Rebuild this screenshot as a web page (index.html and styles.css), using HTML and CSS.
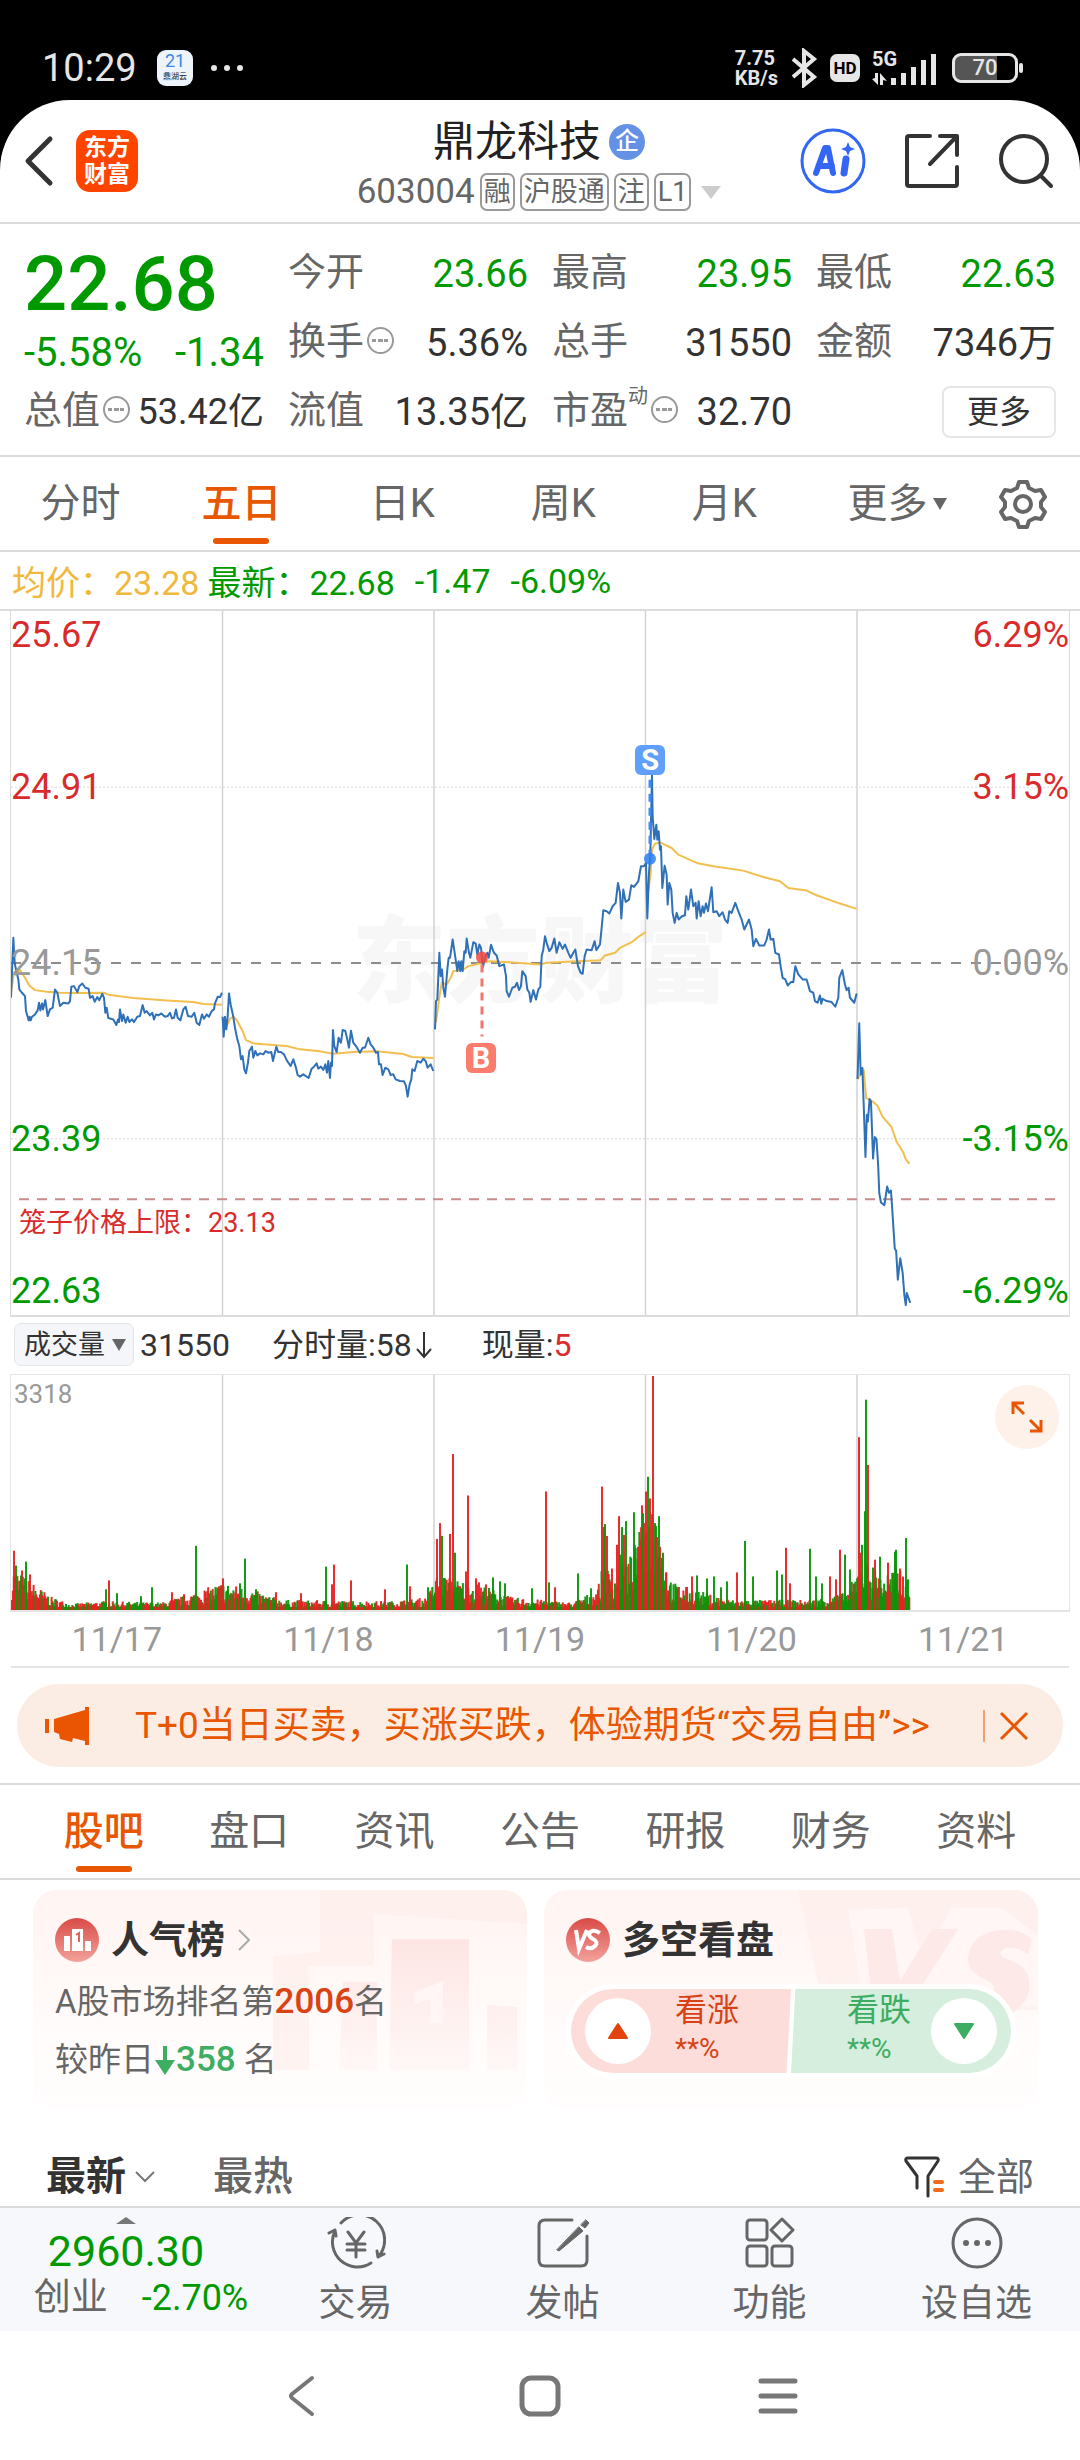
FILE: index.html
```
<!DOCTYPE html>
<html lang="zh-CN">
<head>
    <meta charset="UTF-8">
    <meta name="viewport" content="width=device-width, initial-scale=1">
    <title>鼎龙科技 603004</title>
    <link rel="stylesheet" href="styles.css">
</head>
<body>

<div class="status">
    <span class="time">10:29</span>
    <span class="status-app"><b>21</b><i>鼎湖云</i></span>
    <span class="status-dots"><i></i><i></i><i></i></span>
    <div class="status-right">
        <span class="speed"><span>7.75</span><span>KB/s</span></span>
        <svg width="28" height="40" viewBox="0 0 28 40" fill="none" stroke="#e6e6e6" stroke-width="4"><path d="M3 11l21 18-10 8V3l10 8L3 29"/></svg>
        <span class="hd">HD</span>
        <span class="signal">
            <b>5G</b>
            <svg width="66" height="34" viewBox="0 0 66 34" fill="#e6e6e6"><path d="M0 28l6 6V22H3v5zM8 34h3v-5l4 1-7-8zM19 27h5v7h-5zM29 22h5v12h-5zM39 16h5v18h-5zM49 9h5v25h-5zM59 3h5v31h-5z"/></svg>
        </span>
        <span class="battery">70</span>
    </div>
</div>

<div class="page">
    <header class="header">
        <div class="header-left">
            <button class="icon-btn" aria-label="返回"><svg width="30" height="52" viewBox="0 0 30 52" fill="none" stroke="#333" stroke-width="5" stroke-linecap="round" stroke-linejoin="round"><path d="M26 4L4 26l22 22"/></svg></button>
            <a href="#" class="logo">东方<br>财富</a>
        </div>
        <div class="header-title">
            <h1>鼎龙科技<span class="qi">企</span></h1>
            <div class="code">
                <span>603004</span>
                <span class="tag">融</span>
                <span class="tag">沪股通</span>
                <span class="tag">注</span>
                <span class="tag">L1</span>
                <i class="caret"></i>
            </div>
        </div>
        <div class="header-right">
            <button class="icon-btn" aria-label="AI">
                <svg width="66" height="66" viewBox="0 0 66 66" fill="none" stroke="#3366f5"><circle cx="33" cy="33" r="31" stroke-width="3"/><path d="M16 45l9-25h3l5 25M20 38h12" stroke-width="6" stroke-linecap="round" stroke-linejoin="round"/><path d="M46 31l-2 14" stroke-width="7" stroke-linecap="round"/><path d="M48 14l2 5 5 2-5 2-2 5-2-5-5-2 5-2z" fill="#3366f5" stroke="none"/></svg>
            </button>
            <button class="icon-btn" aria-label="分享">
                <svg width="56" height="56" viewBox="0 0 56 56" fill="none" stroke="#333" stroke-width="4" stroke-linecap="round" stroke-linejoin="round"><path d="M26 3H5q-2 0-2 2v46q0 2 2 2h46q2 0 2-2V34M36 3h17v19M53 3L26 31"/></svg>
            </button>
            <button class="icon-btn" aria-label="搜索">
                <svg width="56" height="56" viewBox="0 0 56 56" fill="none" stroke="#333" stroke-width="4" stroke-linecap="round"><circle cx="26" cy="26" r="23"/><path d="M44 44l9 9"/></svg>
            </button>
        </div>
    </header>

    <section class="quote">
        <div class="col total">
            <div class="price">22.68</div>
            <div class="change"><span>-5.58%</span><span>-1.34</span></div>
            <div class="item"><label>总值<i class="tip"></i></label><span>53.42亿</span></div>
        </div>
        <div class="col">
            <div class="item"><label>今开</label><span class="down">23.66</span></div>
            <div class="item"><label>换手<i class="tip"></i></label><span>5.36%</span></div>
            <div class="item"><label>流值</label><span>13.35亿</span></div>
        </div>
        <div class="col">
            <div class="item"><label>最高</label><span class="down">23.95</span></div>
            <div class="item"><label>总手</label><span>31550</span></div>
            <div class="item"><label>市盈<sup>动</sup><i class="tip"></i></label><span>32.70</span></div>
        </div>
        <div class="col">
            <div class="item"><label>最低</label><span class="down">22.63</span></div>
            <div class="item"><label>金额</label><span>7346万</span></div>
            <div class="item end"><button class="more">更多</button></div>
        </div>
    </section>

    <nav class="tabs period">
        <a href="#">分时</a>
        <a href="#" class="active">五日</a>
        <a href="#">日K</a>
        <a href="#">周K</a>
        <a href="#">月K</a>
        <a href="#" class="wide">更多<i class="caret small"></i></a>
        <button class="icon-btn setting" aria-label="设置">
            <svg width="48" height="50" viewBox="0 0 48 50" fill="none" stroke="#666" stroke-width="4" stroke-linejoin="round"><path d="M20 3h8l2 6 6 3 6-1 4 7-4 5v5l4 5-4 7-6-1-6 3-2 6h-8l-2-6-6-3-6 1-4-7 4-5v-5l-4-5 4-7 6 1 6-3z"/><circle cx="24" cy="25" r="8"/></svg>
        </button>
    </nav>

    <div class="info">
        <span class="avg">均价：23.28</span>
        <span>最新：22.68</span>
        <span class="gap">-1.47</span>
        <span class="gap">-6.09%</span>
    </div>

    <div class="chart">
        <div class="watermark">东方财富</div>
        <svg class="plot" viewBox="0 0 1058 705" preserveAspectRatio="none" fill="none">
            <path d="M211.5 0V705M423 0V705M634.5 0V705M846 0V705" stroke="#d2d2d2" stroke-width="1.5"/>
            <path d="M0 176.5H1058M0 528.5H1058" stroke="#d8d8d8" stroke-dasharray="2 2"/>
            <path d="M0 352.5H1044" stroke="#8c8c8c" stroke-width="2" stroke-dasharray="10 10"/>
            <path d="M8 589H1044" stroke="#c98a8a" stroke-width="2" stroke-dasharray="10 8"/>
            <g class="avg-line">
                <polyline transform="translate(-11 319) scale(.3333)" points="33,190 40,140 60,122 75,145 88,168 105,182 140,187 180,190 240,191 310,190 330,197 400,206 500,213 580,218 610,224 666,226"/>
                <polyline transform="translate(-11 319) scale(.3333)" points="680,290 690,268 700,262 710,272 728,305 738,332 760,342 860,350 900,360 960,366 1000,373 1060,368 1130,366 1210,374 1235,383 1300,386"/>
                <polyline transform="translate(419 129) scale(.3333)" points="18,850 27,780 35,730 50,735 62,715 70,695 100,690 115,680 150,672 180,665 240,668 330,675 350,670 440,665 512,662 525,648 555,640 570,625 605,608 625,592 648,577"/>
                <polyline transform="translate(419 129) scale(.3333)" points="650,480 657,440 662,400 666,330 675,312 690,308 725,325 745,345 800,370 850,380 940,393 1000,412 1050,425 1075,445 1130,453 1160,467 1230,492 1280,508"/>
                <polyline transform="translate(529 29) scale(.3444 .4464)" points="922,985 940,965 947,1028 965,1035 980,1045 995,1070 1020,1092 1035,1125 1055,1150 1062,1165 1073,1175"/>
            </g>
            <g class="price-line">
                <polyline transform="translate(-11 319) scale(.3333)" points="33,205 40,25 44,100 48,120 55,150 58,180 66,190 75,200 78,245 83,262 86,273 89,262 92,273 96,262 105,255 113,243 117,220 121,243 126,222 129,240 136,212 143,260 150,240 158,235 165,180 172,190 180,230 190,220 205,222 210,215 214,172 222,170 232,188 238,170 247,162 256,175 266,178 270,205 278,200 284,217 292,203 298,212 307,193 312,205 316,250 320,235 325,266 340,270 349,287 354,270 357,278 360,240 366,275 370,255 377,280 383,262 388,278 396,270 402,278 412,262 420,260 428,227 434,250 440,245 450,258 457,250 462,270 468,255 475,258 484,252 495,262 503,260 510,250 516,267 522,265 528,240 533,265 541,273 550,240 557,232 564,260 575,262 583,250 590,280 598,287 606,255 612,268 620,255 627,262 635,245 642,240 645,222 653,202 660,203 666,190"/>
                <polyline transform="translate(-11 319) scale(.3333)" points="668,262 671,322 675,262 679,300 683,262 687,192 692,225 700,262 705,295 712,330 718,350 723,390 728,380 733,420 738,432 744,400 748,365 756,352 760,385 766,365 772,378 780,372 790,375 797,365 805,370 814,368 819,395 829,352 835,368 843,368 852,375 858,388 865,400 872,410 880,390 888,415 893,437 900,442 910,435 926,446 935,418 942,412 950,402 955,418 963,412 970,422 976,405 981,430 985,395 990,446 993,400 996,410 999,302 1003,350 1010,368 1016,325 1023,340 1028,302 1036,305 1042,330 1047,355 1053,304 1060,340 1068,350 1080,370 1088,355 1095,355 1105,325 1112,345 1120,355 1128,370 1134,368 1137,405 1143,405 1148,437 1156,415 1165,420 1172,437 1180,435 1187,450 1200,455 1212,456 1218,470 1223,502 1229,465 1234,450 1237,420 1244,425 1252,395 1262,400 1270,388 1277,395 1283,415 1292,405 1300,425"/>
                <polyline transform="translate(419 129) scale(.3333)" points="15,870 18,785 22,780 28,640 32,710 36,690 40,745 45,772 52,690 56,655 60,655 68,600 74,640 82,695 86,665 91,695 94,665 98,695 103,635 107,640 110,597 117,640 121,655 130,608 137,612 142,645 148,615 153,625 159,682 166,650 172,640 176,655 183,616 192,640 200,648 208,680 222,675 228,710 230,755 237,772 247,745 255,742 261,730 267,752 273,740 277,695 287,710 292,750 298,760 302,787 310,752 318,780 325,750 331,742 335,650 340,630 345,590 350,610 358,635 365,625 373,597 380,640 388,608 398,628 405,615 415,640 422,655 430,640 436,630 444,680 452,700 458,703 464,650 470,630 485,632 494,605 499,632 510,615 514,575 520,512 530,515 538,522 548,500 557,490 564,430 570,460 574,537 580,450 587,487 597,480 604,437 612,442 625,425 633,380 642,380 648,370 652,537 657,400 661,345 666,105 668,230 673,298 679,255 682,300 686,275 690,330 693,320 697,445 704,378 710,405 713,495 718,430 724,450 728,520 734,550 740,520 746,540 756,530 765,527 769,470 775,510 783,450 790,500 797,490 800,537 806,485 812,530 818,500 822,520 828,492 834,515 845,443 850,518 860,515 868,530 878,518 885,540 893,550 898,515 905,520 916,490 925,515 935,540 943,570 957,540 965,570 970,620 978,598 988,618 1003,618 1010,600 1017,570 1022,600 1030,598 1036,640 1047,645 1052,680 1058,715 1066,720 1073,738 1083,728 1090,728 1096,680 1105,705 1118,720 1130,720 1140,755 1150,760 1155,785 1163,790 1170,768 1174,793 1178,778 1190,785 1205,788 1216,802 1225,775 1228,715 1237,692 1245,735 1250,752 1256,745 1260,775 1273,790 1280,762"/>
                <polyline transform="translate(529 29) scale(.3444 .4464)" points="922,985 927,860 931,975 936,960 940,1045 945,1160 949,1065 952,1080 957,1030 961,1035 967,1163 972,1115 977,1120 982,1180 985,1240 990,1262 1000,1268 1008,1226 1013,1240 1019,1235 1023,1280 1030,1365 1034,1370 1039,1435 1046,1387 1053,1420 1058,1470 1062,1492 1065,1465 1075,1487"/>
            </g>
            <path d="M471 354V426" stroke="#f0776a" stroke-width="3" stroke-dasharray="8 6"/>
            <circle cx="471" cy="347" r="6" fill="#f4473c" fill-opacity=".85"/>
            <path d="M639 169V248" stroke="#3d8bf5" stroke-width="3" stroke-dasharray="8 6"/>
            <circle cx="639" cy="248" r="6" fill="#2d7ff2" fill-opacity=".85"/>
        </svg>
        <span class="mark sell">S</span>
        <span class="mark buy">B</span>
        <div class="axis left">
            <span class="up">25.67</span><span class="up">24.91</span><span class="mid">24.15</span><span class="down">23.39</span><span class="down">22.63</span>
        </div>
        <div class="axis right">
            <span class="up">6.29%</span><span class="up">3.15%</span><span class="mid">0.00%</span><span class="down">-3.15%</span><span class="down">-6.29%</span>
        </div>
        <span class="cage">笼子价格上限：23.13</span>
    </div>

    <div class="vol-head">
        <label class="picker">
            <select aria-label="指标"><option>成交量</option><option>MACD</option><option>KDJ</option></select>
            <i class="caret small"></i>
        </label>
        <span>31550</span>
        <span class="part">分时量:58<svg width="24" height="28" viewBox="0 0 24 28" fill="none" stroke="#333" stroke-width="2"><path d="M12 1v25M5 18l7 8 7-8"/></svg></span>
        <span>现量:<b>5</b></span>
    </div>

    <div class="volume">
        <svg id="volume" viewBox="0 0 1058 238" preserveAspectRatio="none">
            <path d="M211.5 0V238M423 0V238M634.5 0V238M846 0V238" stroke="#d2d2d2" stroke-width="1.5"/>
        </svg>
        <span class="vol-max">3318</span>
        <button class="expand" aria-label="全屏"><svg width="34" height="34" viewBox="0 0 34 34" fill="none" stroke="#e85600" stroke-width="3"><path d="M14 3H3v11M3 3l11 11M20 31h11V20M31 31L20 20"/></svg></button>
    </div>
    <div class="dates">
        <span>11/17</span><span>11/18</span><span>11/19</span><span>11/20</span><span>11/21</span>
    </div>

    <div class="banner">
        <svg width="44" height="38" viewBox="0 0 44 38" fill="#ea5504"><path d="M0 12h4v14H0zM9 12L40 3V0h4v38h-4v-4l-12-3-1 4-12-3-1-5-5-2z"/></svg>
        <a href="#">T+0当日买卖，买涨买跌，体验期货“交易自由”&gt;&gt;</a>
        <button class="icon-btn" aria-label="关闭"><svg width="30" height="30" viewBox="0 0 30 30" fill="none" stroke="#ea5504" stroke-width="3"><path d="M2 2l26 26M28 2L2 28"/></svg></button>
    </div>

    <nav class="tabs sections">
        <a href="#" class="active">股吧</a>
        <a href="#">盘口</a>
        <a href="#">资讯</a>
        <a href="#">公告</a>
        <a href="#">研报</a>
        <a href="#">财务</a>
        <a href="#">资料</a>
    </nav>

    <div class="cards">
        <div class="card">
            <svg class="card-bg" width="254" height="220" viewBox="0 0 254 220"><defs><linearGradient id="fade" x1="0" y1="0" x2="0" y2="1"><stop offset="0" stop-color="#fde6e4"/><stop offset="1" stop-color="#fff8f7"/></linearGradient></defs><path d="M47 0h207v34L101 24v52H36v104H0V66l47-4z" fill="#fdecea" fill-opacity=".6"/><path d="M119 49h77v131h-80zM70 92h34v88H66zM214 115l30 2v63h-30z" fill="url(#fade)"/><path d="M140 103l30-12v42h-13v-24l-15 5z" fill="#fff6f5"/></svg>
            <h2>
                <svg width="44" height="44" viewBox="0 0 44 44"><circle cx="22" cy="22" r="22" fill="url(#ball)"/><defs><linearGradient id="ball" x1="0" y1="0" x2="0" y2="1"><stop offset="0" stop-color="#d94b47"/><stop offset="1" stop-color="#f3a19b"/></linearGradient></defs><path d="M9 18h6v15H9zM17 11h11v22H17zM30 23h6v10h-6z" fill="#fff"/><path d="M21 17l3-2v9" fill="none" stroke="#de6560" stroke-width="2"/></svg>
                人气榜
                <svg class="chev" width="14" height="24" viewBox="0 0 14 24" fill="none" stroke="#aaa" stroke-width="2"><path d="M2 2l10 10L2 22"/></svg>
            </h2>
            <p>A股市场排名第<b class="rank">2006</b>名</p>
            <p>较昨日<svg width="22" height="32" viewBox="0 0 22 32" fill="#3cad62"><path d="M9 2h4v14h8L11 31 1 16h8z"/></svg><b class="fall">358</b> 名</p>
        </div>
        <div class="card">
            <svg class="card-bg" width="240" height="220" viewBox="0 0 240 220"><path d="M0 0h240v120H26z" fill="#fdecea" fill-opacity=".6"/><path d="M50 20l60-2 14 50 30-50h50l36 28v70H66z" fill="#fff6f5"/><path d="M66 39h28l8 52 32-52h26l-56 88H76zM234 50q-10-12-32-10-30 4-32 28-1 12 14 20 20 8 8 18-12 8-34-4l-10 24q30 14 58 2 32-16 24-42-4-12-24-18-8-6 2-10 10-2 22 6z" fill="#fde9e7"/></svg>
            <h2>
                <svg width="44" height="44" viewBox="0 0 44 44"><circle cx="22" cy="22" r="22" fill="url(#ball)"/><path d="M10 12l3 19 8-19M34 15q-8-5-11 1 0 3 4 5 6 3 2 7-4 4-9 1" fill="none" stroke="#fff" stroke-width="4"/></svg>
                多空看盘
            </h2>
            <div class="vote">
                <button class="bull"><i class="ball"><svg width="22" height="18" viewBox="0 0 22 18"><path d="M11 2l9 14H2z" fill="#e2440f" stroke="#e2440f" stroke-width="2" stroke-linejoin="round"/></svg></i><span>看涨<small>**%</small></span></button>
                <button class="bear"><span>看跌<small>**%</small></span><i class="ball"><svg width="22" height="18" viewBox="0 0 22 18"><path d="M11 16l9-14H2z" fill="#3cad62" stroke="#3cad62" stroke-width="2" stroke-linejoin="round"/></svg></i></button>
            </div>
        </div>
    </div>

    <div class="feed">
        <a href="#" class="current">最新</a>
        <svg width="20" height="12" viewBox="0 0 20 12" fill="none" stroke="#777" stroke-width="2"><path d="M1 1l9 9 9-9"/></svg>
        <a href="#" class="hot">最热</a>
        <a href="#" class="all">
            <svg width="40" height="42" viewBox="0 0 40 42" fill="none" stroke="#333" stroke-width="3" stroke-linecap="round" stroke-linejoin="round"><path d="M13 32V20L2 5q-1-3 2-3h28q3 0 2 3L24 20v20"/><path d="M31 26h7M31 34h7" stroke="#f26a1b" stroke-width="4"/></svg>
            全部
        </a>
    </div>

    <footer class="toolbar">
        <a href="#" class="index">
            <i class="caret rise"></i>
            <b>2960.30</b>
            <span>创业<em>-2.70%</em></span>
        </a>
        <a href="#">
            <svg viewBox="0 0 60 52" fill="none" stroke="#666" stroke-width="3" stroke-linecap="round"><path d="M15 6a25 25 0 0 1 37 34M45 46A25 25 0 0 1 9 14M9 13l-6 3M9 13l1 6M52 40l-1-6M52 40l6-3M22 15l8 11 8-11M30 26v14M21 27h18M21 33h18"/></svg>
            交易
        </a>
        <a href="#">
            <svg viewBox="0 0 60 52" fill="none" stroke="#666" stroke-width="3" stroke-linecap="round"><path d="M39 3H12q-6 0-6 6v34q0 6 6 6h36q6 0 6-6V19"/><path d="M53 3l3 3-4 5-4-3zM46 10l4 4-24 20-2-1z" fill="#666" stroke-width="1"/></svg>
            发帖
        </a>
        <a href="#">
            <svg viewBox="0 0 60 52" fill="none" stroke="#666" stroke-width="3" stroke-linejoin="round"><rect x="7" y="3" width="20" height="20" rx="3"/><rect x="7" y="29" width="20" height="20" rx="3"/><rect x="32" y="29" width="20" height="20" rx="3"/><path d="M42 2l11 11-11 11-11-11z"/></svg>
            功能
        </a>
        <a href="#">
            <svg viewBox="0 0 60 52" fill="none" stroke="#666" stroke-width="3"><circle cx="30" cy="26" r="24"/><g fill="#666" stroke="none"><circle cx="19" cy="26" r="3"/><circle cx="30" cy="26" r="3"/><circle cx="41" cy="26" r="3"/></g></svg>
            设自选
        </a>
    </footer>

    <div class="sysnav">
        <button class="icon-btn" aria-label="后退"><svg width="44" height="44" viewBox="0 0 44 44" fill="none" stroke="#777" stroke-width="4" stroke-linecap="round" stroke-linejoin="round"><path d="M32 4L12 20q-2 2 0 4l20 16"/></svg></button>
        <button class="icon-btn" aria-label="主屏幕"><svg width="44" height="44" viewBox="0 0 44 44" fill="none" stroke="#777" stroke-width="5"><rect x="4" y="4" width="36" height="36" rx="9"/></svg></button>
        <button class="icon-btn" aria-label="菜单"><svg width="44" height="44" viewBox="0 0 44 44" fill="none" stroke="#777" stroke-width="5" stroke-linecap="round"><path d="M5 7h34M5 22h34M5 37h34"/></svg></button>
    </div>
</div>

<script src="script.js"></script>
</body>
</html>
```
FILE: styles.css
```
* {
    box-sizing: border-box;
}

body {
    margin: 0;
    background: #000;
    color: #333;
    font-family: Roboto, "Noto Sans CJK SC", sans-serif;
    font-size: 38px;
}

h1, h2, p {
    margin: 0;
    font-weight: 400;
}

a {
    color: inherit;
    text-decoration: none;
}

i, em {
    font-style: normal;
}

svg {
    flex: none;
}

button, select {
    margin: 0;
    padding: 0;
    border: 0;
    background: none;
    color: inherit;
    font: inherit;
}

.icon-btn {
    display: flex;
    align-items: center;
    justify-content: center;
}

.up {
    color: #d92b2b;
}

.down {
    color: #009a00;
}

.caret {
    border: 10px solid transparent;
    border-top: 13px solid #ccc;
    border-bottom: 0;
}

.caret.small {
    border-width: 12px 7px 0;
    border-top-color: #666;
}

/* 状态栏 */
.status {
    height: 100px;
    padding: 36px 62px 0 42px;
    display: flex;
    align-items: center;
    color: #e6e6e6;
}

.status .time {
    width: 115px;
}

.status-app {
    width: 36px;
    height: 36px;
    border-radius: 9px;
    background: #eef4fb;
    color: #222;
    text-align: center;
}

.status-app b {
    display: block;
    font-size: 18px;
    font-weight: 400;
    line-height: 22px;
    color: #3b86e0;
}

.status-app i {
    display: block;
    font-size: 8px;
    line-height: 10px;
}

.status-dots {
    display: flex;
    gap: 7px;
    margin-left: 18px;
}

.status-dots i {
    width: 6px;
    height: 6px;
    border-radius: 50%;
    background: #e6e6e6;
}

.status-right {
    margin-left: auto;
    display: flex;
    align-items: center;
    gap: 12px;
}

.speed {
    font-size: 20px;
    line-height: 24px;
    font-weight: 700;
}

.speed span {
    display: block;
    height: 20px;
    line-height: 20px;
}

.hd {
    width: 30px;
    height: 28px;
    border-radius: 7px;
    background: #e6e6e6;
    color: #000;
    font-size: 17px;
    line-height: 28px;
    font-weight: 700;
    text-align: center;
}

.signal {
    position: relative;
    display: flex;
}

.signal b {
    position: absolute;
    left: 0;
    top: -2px;
    font-size: 20px;
    line-height: 20px;
}

.battery {
    position: relative;
    width: 66px;
    height: 30px;
    margin-left: 2px;
    border: 3px solid #e6e6e6;
    border-radius: 9px;
    background: linear-gradient(90deg, #555 70%, #000 70%);
    font-size: 22px;
    line-height: 24px;
    font-weight: 500;
    text-align: center;
}

.battery::after {
    content: "";
    position: absolute;
    right: -8px;
    top: 7px;
    width: 4px;
    height: 10px;
    border-radius: 2px;
    background: #e6e6e6;
}

.page {
    background: #fff;
    border-radius: 70px 70px 0 0;
}

/* 标题栏 */
.header {
    height: 124px;
    padding: 0 26px 0 24px;
    display: grid;
    grid-template-columns: 1fr auto 1fr;
    align-items: center;
    border-bottom: 2px solid #dcdcdc;
}

.header-left, .header-right {
    display: flex;
    align-items: center;
}

.header-left {
    gap: 22px;
}

.header-right {
    gap: 38px;
    justify-content: flex-end;
}

.logo {
    width: 62px;
    height: 62px;
    padding-top: 4px;
    border-radius: 14px;
    background: #ff4400;
    color: #fff;
    font-size: 23px;
    line-height: 27px;
    font-weight: 700;
    text-align: center;
}

.header-title h1 {
    display: flex;
    align-items: center;
    justify-content: center;
    gap: 8px;
    margin-top: 8px;
    font-size: 42px;
    line-height: 54px;
    color: #222;
}

.qi {
    width: 36px;
    height: 36px;
    border-radius: 50%;
    background: #6391e6;
    color: #fff;
    font-size: 24px;
    line-height: 35px;
    font-weight: 500;
    text-align: center;
}

.code {
    display: flex;
    align-items: center;
    gap: 5px;
    font-size: 35px;
    line-height: 46px;
    color: #666;
}

.code .caret {
    margin-left: 5px;
}

.tag {
    height: 38px;
    padding: 0 2px;
    border: 2px solid #999;
    border-radius: 7px;
    font-size: 27px;
    line-height: 34px;
}

/* 行情 */
.quote {
    padding: 15px 24px 9px;
    display: grid;
    grid-template-columns: repeat(4, 1fr);
    gap: 24px;
    border-bottom: 2px solid #dcdcdc;
}

.price {
    font-size: 76px;
    line-height: 90px;
    font-weight: 500;
    color: #009a00;
}

.change {
    display: flex;
    justify-content: space-between;
    font-size: 40px;
    line-height: 48px;
    color: #009a00;
}

.item {
    height: 69px;
    display: flex;
    align-items: center;
    justify-content: space-between;
    line-height: 48px;
    white-space: nowrap;
}

.item.end {
    justify-content: flex-end;
}

.total .item {
    font-size: 36px;
}

.item label {
    display: flex;
    align-items: center;
    padding-bottom: 4px;
    font-size: 38px;
    color: #666;
}

.item sup {
    align-self: flex-start;
    font-size: 20px;
    line-height: 20px;
}

.tip {
    width: 27px;
    height: 27px;
    margin-left: 3px;
    border: 2px solid #999;
    border-radius: 50%;
    background: radial-gradient(circle, #999 2px, transparent 2px) center / 6px 100% content-box no-repeat, radial-gradient(circle, #999 2px, transparent 2px) 0 0 / 6px 100% content-box;
    padding: 0 2px;
}

.more {
    width: 114px;
    height: 52px;
    border: 2px solid #e6e6e6;
    border-radius: 8px;
    font-size: 32px;
    line-height: 44px;
}

/* 选项卡 */
.tabs {
    height: 95px;
    display: flex;
    align-items: center;
    font-size: 40px;
    color: #666;
    border-bottom: 2px solid #dcdcdc;
}

.tabs a {
    position: relative;
    flex: 1;
    line-height: 93px;
    text-align: center;
}

.tabs .wide {
    flex: 1.15;
    display: flex;
    align-items: center;
    justify-content: center;
    gap: 6px;
}

.tabs .active {
    color: #e85600;
    font-weight: 500;
}

.tabs .active::after {
    content: "";
    position: absolute;
    left: 50%;
    bottom: 6px;
    width: 56px;
    height: 6px;
    margin-left: -28px;
    border-radius: 3px;
    background: #e85600;
}

.setting {
    width: 90px;
    padding-right: 24px;
}

.sections {
    padding: 0 31px;
    border-top: 2px solid #dcdcdc;
    height: 97px;
}

.info {
    height: 59px;
    padding-left: 12px;
    display: flex;
    gap: 8px;
    align-items: center;
    font-size: 34px;
    color: #009a00;
    border-bottom: 2px solid #dcdcdc;
}

.info .avg {
    color: #f0b83c;
}

.info .gap {
    margin-left: 12px;
}

/* 分时图 */
.chart {
    position: relative;
    margin: 0 10px;
    border: 2px solid #dcdcdc;
    border-width: 0 1px 2px;
}

.plot {
    position: relative;
    display: block;
    width: 100%;
    height: 704px;
}

.plot polyline {
    vector-effect: non-scaling-stroke;
    stroke-width: 2;
    stroke-linejoin: round;
}

.avg-line {
    stroke: #f2bf4f;
}

.price-line {
    stroke: #2f70b7;
}

.watermark {
    position: absolute;
    left: 0;
    right: 0;
    top: 50%;
    font-size: 94px;
    line-height: 94px;
    margin-top: -47px;
    font-weight: 900;
    text-align: center;
    color: #f7f7f7;
}

.mark {
    position: absolute;
    width: 30px;
    height: 30px;
    border-radius: 6px;
    color: #fff;
    font-size: 29px;
    line-height: 30px;
    font-weight: 700;
    text-align: center;
}

.mark.sell {
    left: 59%;
    top: 134px;
    background: #609ffa;
}

.mark.buy {
    left: 43%;
    top: 432px;
    background: #fb7d6e;
}

.axis {
    position: absolute;
    top: 0;
    height: 100%;
    display: flex;
    flex-direction: column;
    justify-content: space-between;
    font-size: 36px;
    line-height: 48px;
}

/* 首尾刻度贴边，中间三格均分 */
.axis span:nth-child(2) {
    margin-bottom: 12px;
    margin-top: -12px;
}

.axis span:nth-child(4) {
    margin-top: 12px;
    margin-bottom: -12px;
}

.axis.left {
    left: 0;
}

.axis.right {
    right: 0;
    text-align: right;
}

.axis .mid {
    color: #999;
}

.cage {
    position: absolute;
    left: 8px;
    bottom: 74px;
    font-size: 27px;
    line-height: 36px;
    color: #d92b2b;
}

/* 成交量 */
.vol-head {
    height: 57px;
    padding: 0 0 2px 14px;
    display: flex;
    align-items: center;
    gap: 6px;
    font-size: 32px;
    line-height: 40px;
}

.vol-head .part {
    display: flex;
    align-items: center;
    margin: 0 40px 0 36px;
}

.vol-head b {
    font-weight: 400;
    color: #d92b2b;
}

.picker {
    position: relative;
    color: #333;
}

.picker select {
    appearance: none;
    width: 120px;
    height: 43px;
    padding-left: 9px;
    border: 1px solid #e4e5ea;
    border-radius: 7px;
    background: #f5f6f9;
    font-size: 27px;
    display: block;
}

.picker .caret {
    position: absolute;
    right: 8px;
    top: 16px;
}

.volume {
    position: relative;
    margin: 0 10px;
    border: 2px solid #e4e4e4;
    border-width: 1px 1px 2px;
}

.volume > svg {
    display: block;
    width: 100%;
    height: 235px;
}

.vol-max {
    position: absolute;
    left: 3px;
    top: 4px;
    font-size: 26px;
    line-height: 30px;
    color: #999;
}

.expand {
    position: absolute;
    right: 10px;
    top: 10px;
    width: 64px;
    height: 64px;
    border-radius: 50%;
    background: #fef1ea;
    display: flex;
    align-items: center;
    justify-content: center;
}

.dates {
    margin: 0 11px;
    height: 56px;
    display: flex;
    border-bottom: 2px solid #e4e4e4;
    font-size: 34px;
    line-height: 54px;
    color: #999;
    text-align: center;
}

.dates span {
    flex: 1;
}

.banner {
    margin: 16px 17px;
    height: 83px;
    padding: 0 34px 0 28px;
    display: flex;
    align-items: center;
    border-radius: 42px;
    background: #fcede4;
    color: #e85600;
}

.banner a {
    flex: 1;
    margin-left: 46px;
    font-size: 37px;
    line-height: 48px;
    white-space: nowrap;
}

.banner button {
    height: 32px;
    padding-left: 14px;
    border-left: 2px solid #f0a072;
}

/* 卡片 */
.cards {
    padding: 10px 42px 0 33px;
    display: grid;
    grid-template-columns: 1fr 1fr;
    gap: 17px;
}

.card {
    position: relative;
    height: 220px;
    padding: 22px;
    border-radius: 24px;
    background: linear-gradient(#fff4f2, #fffcfb 70%, #fffdfd);
    overflow: hidden;
}

.card > * {
    position: relative;
}

.card .card-bg {
    position: absolute;
    right: 0;
    top: 0;
}

.card h2 {
    display: flex;
    align-items: center;
    gap: 12px;
    font-size: 38px;
    line-height: 56px;
    font-weight: 700;
}

.card p {
    display: flex;
    align-items: center;
    margin-top: 10px;
    font-size: 33px;
    line-height: 48px;
    color: #666;
    white-space: pre;
}

.card .rank {
    color: #d84315;
    font-size: 35px;
    font-weight: 500;
}

.card .fall {
    color: #3cad62;
    font-size: 35px;
    font-weight: 500;
}

.vote {
    margin: 16px 0 0;
    display: flex;
    border: 5px solid #fff;
    border-radius: 48px;
    overflow: hidden;
    background: #fff;
}

.vote button {
    flex: 1;
    height: 84px;
    padding: 0 14px 4px;
    display: flex;
    align-items: center;
    justify-content: space-between;
    text-align: left;
    font-size: 32px;
    line-height: 40px;
}

.vote .ball {
    width: 66px;
    height: 66px;
    margin-top: 4px;
    border-radius: 50%;
    background: #fff;
    display: flex;
    align-items: center;
    justify-content: center;
}

.vote small {
    display: block;
    font-size: 28px;
    line-height: 38px;
}

.vote .bull {
    background: #fdddda;
    color: #d84315;
    justify-content: flex-start;
    gap: 24px;
    clip-path: polygon(0 0, 100% 0, 98% 100%, 0 100%);
}

.vote .bear {
    background: #d6eedd;
    color: #3cad62;
    justify-content: flex-end;
    gap: 20px;
    clip-path: polygon(2% 0, 100% 0, 100% 100%, 0 100%);
}

.feed {
    height: 96px;
    padding: 38px 46px 0;
    display: flex;
    align-items: center;
    font-size: 40px;
    line-height: 56px;
    color: #666;
}

.feed .current {
    margin-right: 9px;
    font-weight: 700;
    color: #333;
}

.feed .hot {
    margin-left: 58px;
    font-weight: 500;
}

.feed .all {
    margin-left: auto;
    display: flex;
    align-items: center;
    gap: 14px;
    font-size: 38px;
}

/* 底部工具栏 */
.toolbar {
    height: 125px;
    display: grid;
    grid-template-columns: 252px repeat(4, 1fr);
    border-top: 2px solid #dcdcdc;
    background: #f7f8fb;
    color: #666;
}

.toolbar a {
    padding-top: 9px;
    display: flex;
    flex-direction: column;
    align-items: center;
    font-size: 37px;
    line-height: 54px;
}

.toolbar a > svg {
    width: 60px;
    height: 52px;
    margin-bottom: 8px;
}

.toolbar .rise {
    border-width: 0 10px 7px;
    border-bottom: 7px solid #777;
}

.toolbar .index b {
    font-size: 43px;
    line-height: 54px;
    font-weight: 400;
    color: #009a00;
}

.toolbar .index span {
    padding-left: 30px;
    display: flex;
    gap: 34px;
    line-height: 40px;
}

.toolbar em {
    font-size: 36px;
    color: #009a00;
}

.sysnav {
    height: 130px;
    display: flex;
    align-items: center;
    justify-content: center;
    gap: 194px;
}
```
FILE: script.js
```
// 成交量柱：[x, 高度, 颜色]
const spikes = [
    [2, 60, 'r'], [4, 45, 'g'], [10, 40, 'r'], [14, 49, 'g'], [18, 36, 'r'], [94, 21, 'g'], [97, 30, 'r'], [105, 17, 'g'],
    [129, 14, 'g'], [140, 23, 'g'], [160, 18, 'r'], [172, 16, 'r'], [184, 65, 'g'], [207, 24, 'r'], [211, 32, 'r'],
    [228, 27, 'g'], [233, 52, 'g'], [244, 21, 'g'], [264, 18, 'r'], [289, 17, 'r'], [314, 44, 'g'], [320, 26, 'r'],
    [322, 46, 'r'], [339, 30, 'r'], [373, 21, 'r'], [395, 46, 'g'], [398, 24, 'r'], [416, 23, 'g'], [425, 72, 'r'],
    [428, 88, 'r'], [430, 75, 'g'], [433, 32, 'g'], [438, 77, 'r'], [441, 158, 'r'], [443, 58, 'g'], [454, 39, 'r'],
    [456, 116, 'r'], [464, 32, 'r'], [467, 28, 'r'], [474, 26, 'r'], [481, 33, 'g'], [488, 29, 'g'], [493, 27, 'g'],
    [520, 22, 'g'], [534, 120, 'r'], [537, 28, 'g'], [543, 23, 'r'], [566, 37, 'g'], [579, 22, 'g'], [590, 125, 'r'],
    [592, 84, 'r'], [593, 87, 'g'], [595, 75, 'r'], [600, 42, 'r'], [605, 66, 'r'], [607, 95, 'r'], [608, 56, 'g'],
    [610, 84, 'g'], [612, 76, 'r'], [614, 90, 'g'], [622, 99, 'g'], [626, 64, 'r'], [630, 106, 'r'], [631, 98, 'g'],
    [632, 88, 'r'], [634, 120, 'r'], [636, 135, 'g'], [638, 113, 'r'], [640, 97, 'r'], [641, 237, 'r'], [643, 88, 'g'],
    [644, 85, 'g'], [645, 74, 'r'], [647, 95, 'g'], [648, 64, 'r'], [651, 58, 'g'], [654, 38, 'r'], [680, 34, 'r'],
    [685, 35, 'g'], [695, 32, 'g'], [702, 34, 'g'], [709, 23, 'g'], [715, 29, 'g'], [725, 38, 'r'], [733, 70, 'g'],
    [741, 34, 'g'], [765, 40, 'g'], [770, 36, 'g'], [774, 63, 'r'], [778, 27, 'r'], [798, 62, 'g'], [804, 34, 'g'],
    [810, 27, 'g'], [818, 34, 'r'], [824, 31, 'r'], [828, 61, 'r'], [833, 56, 'g'], [838, 41, 'g'], [847, 175, 'r'],
    [848, 58, 'r'], [850, 66, 'g'], [853, 100, 'g'], [854, 213, 'g'], [856, 147, 'r'], [861, 43, 'g'], [863, 51, 'r'],
    [868, 54, 'g'], [876, 48, 'r'], [883, 59, 'g'], [884, 61, 'g'], [888, 42, 'r'], [894, 73, 'g'], [896, 31, 'g']
];

// 其余分钟的平均量：[x, 高度]
const base = [
    [0, 34], [20, 22], [40, 10], [60, 5], [90, 7], [150, 6], [175, 12], [211, 22], [240, 16], [270, 8], [380, 7],
    [415, 10], [425, 28], [445, 24], [470, 20], [500, 10], [560, 6], [585, 16], [592, 38], [600, 26], [620, 45],
    [635, 80], [650, 50], [660, 22], [700, 12], [720, 8], [800, 8], [835, 14], [850, 40], [870, 28], [890, 35], [900, 10]
];

const colors = {r: '#e62222', g: '#089608'};
const svg = document.getElementById('volume');

function bar(x, h, color) {
    const rect = document.createElementNS('http://www.w3.org/2000/svg', 'rect');
    rect.setAttribute('x', x);
    rect.setAttribute('y', 238 - h);
    rect.setAttribute('width', 2);
    rect.setAttribute('height', h);
    rect.setAttribute('fill', colors[color]);
    rect.setAttribute('fill-opacity', 0.95);
    svg.appendChild(rect);
}

let seed = 7;
function rand() {
    seed = (seed * 16807) % 2147483647;
    return seed / 2147483647;
}

let k = 0;
for (let x = 0; x < 898; x += 0.9) {
    while (x > base[k + 1][0]) k++;
    const [x0, h0] = base[k];
    const [x1, h1] = base[k + 1];
    const h = h0 + (h1 - h0) * (x - x0) / (x1 - x0);
    const red = (x > 845 || (x > 655 && x < 680)) ? 0.35 : 0.58;
    bar(x, Math.max(3, h * (0.3 + rand())), rand() < red ? 'r' : 'g');
}
spikes.forEach(s => bar(s[0], s[1], s[2]));
```
